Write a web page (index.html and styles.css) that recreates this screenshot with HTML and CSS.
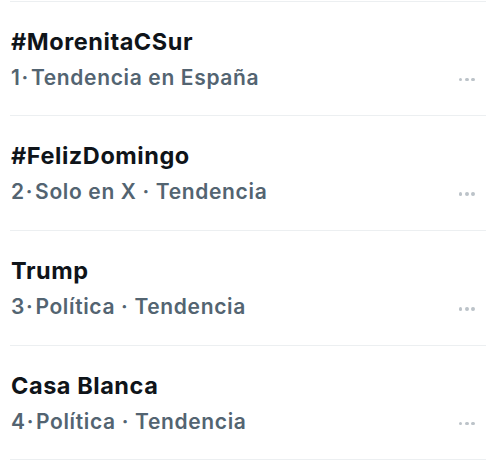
FILE: index.html
```html
<!DOCTYPE html>
<html lang="es">
<head>
<meta charset="utf-8">
<link rel="stylesheet" href="styles.css">
</head>
<body>
<div class="list">
  <div class="trend">
    <div class="text">
      <div class="title">#MorenitaCSur</div>
      <div class="meta">1<span class="sep-tight">·</span>Tendencia en España</div>
    </div>
    <div class="more"><span></span><span></span><span></span></div>
  </div>
  <div class="trend">
    <div class="text">
      <div class="title">#FelizDomingo</div>
      <div class="meta">2<span class="sep-tight">·</span>Solo en X · Tendencia</div>
    </div>
    <div class="more"><span></span><span></span><span></span></div>
  </div>
  <div class="trend">
    <div class="text">
      <div class="title">Trump</div>
      <div class="meta">3<span class="sep-tight">·</span>Política · Tendencia</div>
    </div>
    <div class="more"><span></span><span></span><span></span></div>
  </div>
  <div class="trend">
    <div class="text">
      <div class="title">Casa Blanca</div>
      <div class="meta">4<span class="sep-tight">·</span>Política · Tendencia</div>
    </div>
    <div class="more"><span></span><span></span><span></span></div>
  </div>
</div>
</body>
</html>
```
FILE: styles.css
```css
html, body {
  margin: 0;
  padding: 0;
  background: #ffffff;
}
body {
  font-family: Inter, "Noto Sans", "Liberation Sans", sans-serif;
  -webkit-font-smoothing: antialiased;
}
.list {
  padding-top: 0.5px;
}
.trend {
  margin: 0 10px;
  border-top: 1px solid #eceff1;
  height: 113.7px;
  display: flex;
  align-items: flex-start;
  justify-content: space-between;
  padding-left: 1px;
  padding-right: 11px;
  box-sizing: content-box;
}
.trend:last-child {
  border-bottom: 1px solid #eceff1;
}
.text {
  padding-top: 26px;
  display: flex;
  flex-direction: column;
}
.title {
  font-size: 23.5px;
  line-height: 28px;
  font-weight: 700;
  color: #0f1419;
  letter-spacing: 0.55px;
}
.meta {
  margin-top: 10px;
  font-size: 21px;
  line-height: 24px;
  font-weight: 600;
  color: #536471;
  letter-spacing: 0.65px;
  white-space: nowrap;
}
.sep-tight {
  margin: 0 2px 0 1px;
}
.more {
  display: flex;
  gap: 2.5px;
  margin-top: 76px;
}
.more span {
  width: 3.8px;
  height: 3.8px;
  border-radius: 50%;
  background: #bcc3c9;
}
```
